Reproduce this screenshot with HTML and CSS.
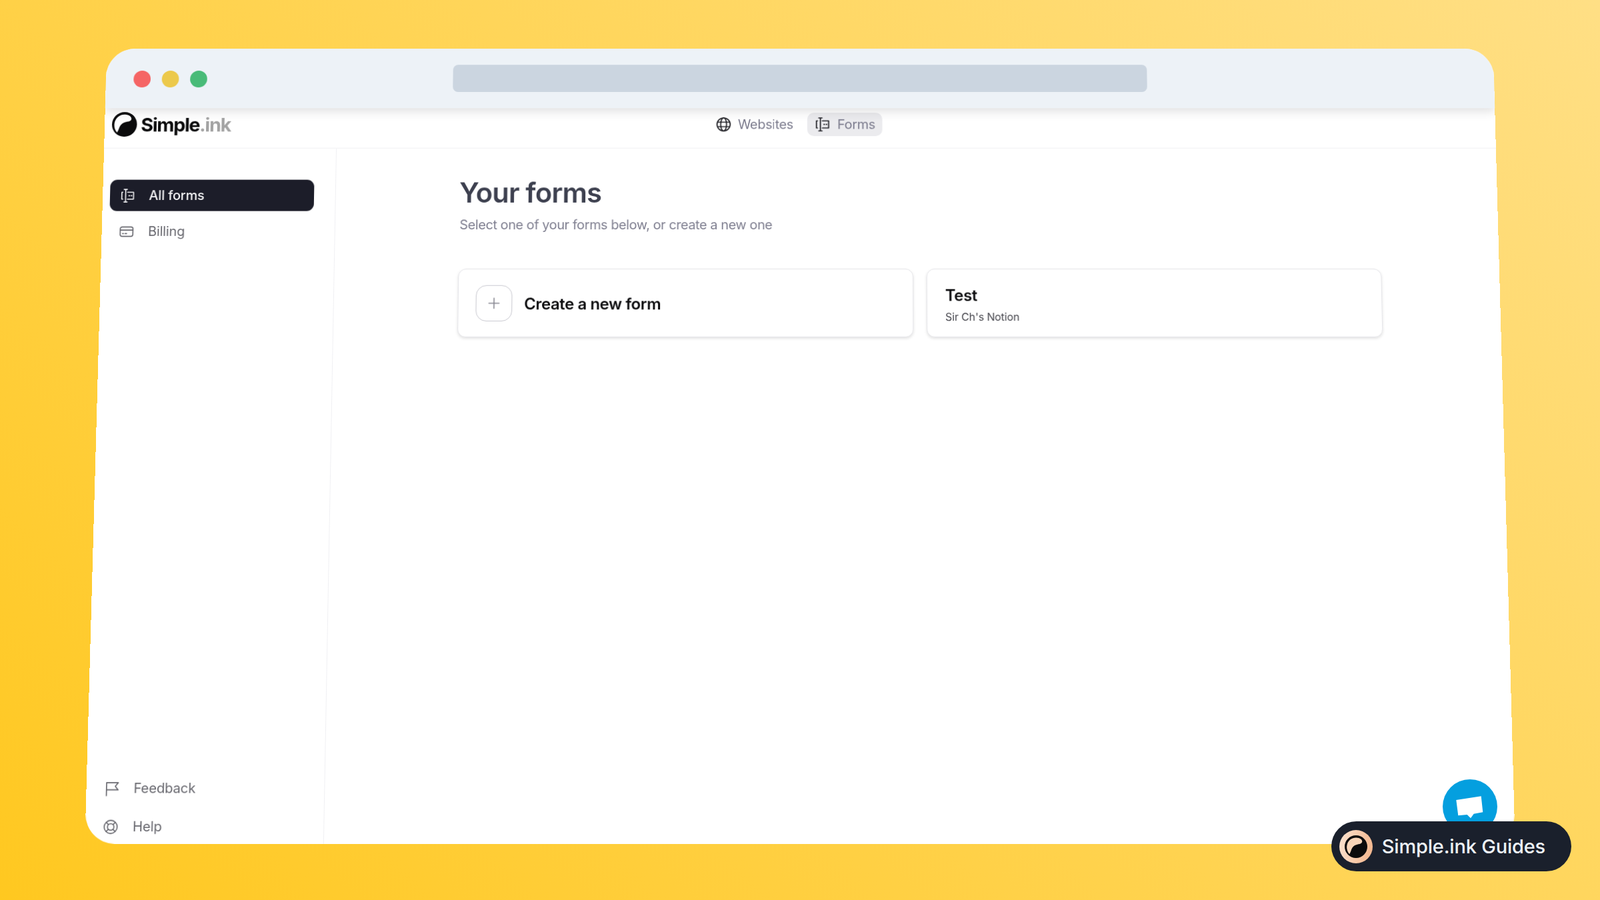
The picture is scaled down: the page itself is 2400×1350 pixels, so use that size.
FILE: index.html
```html
<!DOCTYPE html>
<html>
<head>
<meta charset="utf-8">
<title>Simple.ink forms</title>
<link rel="stylesheet" href="styles.css">
</head>
<body>
    <div class="window">
        <div class="chrome">
            <div class="dots">
                <span class="dot dot-red"></span>
                <span class="dot dot-yellow"></span>
                <span class="dot dot-green"></span>
            </div>
            <div class="urlbar"></div>
        </div>
        <div class="topnav">
            <a class="brand">
                <svg class="brand-logo" viewBox="0 0 100 100"><circle cx="50" cy="50" r="50" fill="#0b0b0c"/><path fill="#fff" d="M21 83C5 65 5 35 24 19C38 8 60 7 72 17C81 25 78 36 66 38C52 40 40 44 33 56C28 65 27 75 21 83Z"/></svg>
                <span class="brand-name">Simple<span class="brand-ink">.ink</span></span>
            </a>
            <nav class="tabs">
                <a class="tab">
                    <svg class="icon tab-globe" viewBox="0 0 24 24"><circle cx="12" cy="12" r="10"/><ellipse cx="12" cy="12" rx="4.500" ry="10"/><path d="M2.800 8.500h18.400M2.800 15.500h18.400"/></svg>
                    Websites
                </a>
                <a class="tab tab-active">
                    <svg class="icon tab-form" viewBox="0 0 24 24"><path d="M4.500 6.500H3v11h1.500M12 6.500h9.500v11H12M6.500 2h5M6.500 22h5M9 2v20"/><path class="icon-dots" d="M14.500 12h.5M18 12h.5"/></svg>
                    Forms
                </a>
            </nav>
            <div></div>
        </div>
        <div class="content">
            <aside class="sidebar">
                <ul class="menu">
                    <li class="menu-item menu-active">
                        <svg class="icon" viewBox="0 0 24 24"><path d="M4.500 6.500H3v11h1.500M12 6.500h9.500v11H12M6.500 2h5M6.500 22h5M9 2v20"/><path class="icon-dots" d="M14.500 12h.5M18 12h.5"/></svg>
                        All forms
                    </li>
                    <li class="menu-item">
                        <svg class="icon" viewBox="0 0 24 24"><rect x="2" y="4.500" width="20" height="15" rx="3"/><path d="M2 9.500h20"/><path class="icon-dots" d="M6 15h1M10 15h2"/></svg>
                        Billing
                    </li>
                </ul>
                <ul class="menu menu-bottom">
                    <li class="menu-item">
                        <svg class="icon" viewBox="0 0 24 24"><path d="M4 23V3h18l-4.500 5.500L22 14H4"/></svg>
                        Feedback
                    </li>
                    <li class="menu-item">
                        <svg class="icon" viewBox="0 0 24 24"><circle cx="12" cy="12" r="10"/><circle cx="12" cy="12" r="5"/><path d="M5 5l3.500 3.500M19 5l-3.500 3.500M5 19l3.500-3.500M19 19l-3.500-3.500"/></svg>
                        Help
                    </li>
                </ul>
            </aside>
            <main class="main">
                <h1 class="title">Your forms</h1>
                <p class="subtitle">Select one of your forms below, or create a new one</p>
                <div class="cards">
                    <a class="card card-new">
                        <span class="plus">
                            <svg class="icon" viewBox="0 0 24 24"><path d="M12 4v16M4 12h16"/></svg>
                        </span>
                        <span class="card-title">Create a new form</span>
                    </a>
                    <a class="card card-form">
                        <span class="card-title">Test</span>
                        <span class="card-sub">Sir Ch's Notion</span>
                    </a>
                </div>
            </main>
        </div>
    </div>

    <div class="chat">
        <svg viewBox="0 0 82 82"><path fill="#fff" d="M20.300 31L57.700 25.300L60.300 49.300L46.700 51.700L42 58.300L36.700 53L23.300 54.300Z"/></svg>
    </div>
    <div class="guides">
        <span class="guides-logo">
            <svg viewBox="0 0 100 100"><circle cx="50" cy="50" r="50" fill="#0b0b0c"/><path class="guides-swirl" d="M21 83C5 65 5 35 24 19C38 8 60 7 72 17C81 25 78 36 66 38C52 40 40 44 33 56C28 65 27 75 21 83Z"/></svg>
        </span>
        Simple.ink Guides
    </div>
</body>
</html>
```

FILE: styles.css
```css
* { box-sizing: border-box; }
html, body { margin: 0; height: 100%; }
body {
    height: 1350px;
    padding-top: 63px;
    overflow: hidden;
    position: relative;
    font-family: "Inter", "Liberation Sans", sans-serif;
    background: linear-gradient(42deg, #ffc820, #ffdf85);
}

/* the whole browser is tilted back a little */
.window {
    width: 2112px;
    height: 1194px;
    margin: 0 auto;
    display: flex;
    flex-direction: column;
    overflow: hidden;
    background: #fff;
    border-radius: 44px;
    transform: perspective(2000px) rotateX(3deg);
}

.chrome {
    height: 92px;
    flex: none;
    display: grid;
    grid-template-columns: 1fr 1056px 1fr;
    align-items: center;
    background: #edf2f7;
    position: relative;
    z-index: 1;
    box-shadow: 0 5px 14px rgba(60, 60, 70, .16);
}
.dots { display: flex; gap: 17px; padding: 2px 0 0 42px; }
.dot { width: 26px; height: 26px; border-radius: 50%; }
.dot-red { background: #f56565; }
.dot-yellow { background: #ecc94b; }
.dot-green { background: #48bb78; }
.urlbar { height: 42px; background: #cbd5e0; border-radius: 8px; grid-column: 2; }

.topnav {
    height: 62px;
    flex: none;
    display: grid;
    grid-template-columns: 1fr auto 1fr;
    align-items: start;
    padding-top: 6px;
    border-bottom: 1px solid #f0f0f3;
}
.brand { display: flex; align-items: center; gap: 6px; height: 38px; padding-left: 11px; }
.brand-logo { width: 38px; height: 38px; }
.brand-name { font-size: 29px; font-weight: 700; letter-spacing: -1.300px; color: #0b0b0c; }
.brand-ink { color: #a3a3a3; }
.tabs { display: flex; gap: 21px; margin: 1px 13px 0 0; }
.tab {
    display: flex;
    align-items: center;
    gap: 10px;
    height: 36px;
    padding: 0 10px;
    font-size: 20px;
    letter-spacing: -.3px;
    color: #7b7b8d;
    border-radius: 10px;
    margin-right: -10px;
}
.tab-active { background: #ebebee; margin: 0; padding: 0 11px; gap: 11px; }
.tab .icon { width: 24px; height: 24px; color: #1f1f24; }

.icon {
    width: 23px;
    height: 23px;
    flex: none;
    fill: none;
    stroke: currentColor;
    stroke-width: 1.700;
    stroke-linecap: round;
    stroke-linejoin: round;
}
.icon-dots { stroke-width: 2; }

.content { flex: 1; display: flex; min-height: 0; }
.sidebar {
    width: 353px;
    flex: none;
    display: flex;
    flex-direction: column;
    justify-content: space-between;
    padding: 48px 32px 0 11px;
    border-right: 1px solid #f0f0f3;
}
.menu { list-style: none; margin: 0; padding: 0; display: flex; flex-direction: column; gap: 7px; }
.menu-bottom { gap: 8px; margin-bottom: 1px; }
.menu-item {
    display: flex;
    align-items: center;
    gap: 21px;
    height: 48px;
    padding-left: 15px;
    font-size: 20px;
    letter-spacing: -.15px;
    color: #68686f;
    border-radius: 11px;
}
.menu-active { background: #1c1d29; color: #f2f2f4; font-weight: 500; }

.main { flex: 1; padding: 42px 178px 0 187px; }
.title {
    margin: 0;
    font-size: 42px;
    line-height: 52px;
    font-weight: 600;
    letter-spacing: -.8px;
    color: #3d404f;
}
.subtitle {
    margin: 9px 0 53px 1px;
    font-size: 20px;
    line-height: 28px;
    letter-spacing: -.4px;
    color: #7f7f90;
}
.cards { display: grid; grid-template-columns: 1fr 1fr; gap: 20px; }
.card {
    height: 104px;
    display: flex;
    background: #fff;
    border: 1px solid #e6e6ea;
    border-radius: 12px;
    box-shadow: 0 2px 4px rgba(0, 0, 0, .12);
}
.card-new { align-items: center; gap: 18px; padding-left: 26px; }
.card-form { flex-direction: column; justify-content: center; gap: 8px; padding: 5px 0 0 27px; }
.card-title { font-size: 24px; font-weight: 600; letter-spacing: -.38px; color: #0c0c0e; }
.card-new .card-title { padding-top: 2px; }
.card-sub { font-size: 16px; color: #45454c; letter-spacing: -.1px; }
.plus {
    width: 55px;
    height: 55px;
    display: flex;
    align-items: center;
    justify-content: center;
    border: 1px solid #c9c9d0;
    border-radius: 16px;
    color: #85858f;
}

.chat {
    position: absolute;
    right: 154px;
    bottom: 99px;
    width: 82px;
    height: 82px;
    border-radius: 50%;
    background: #049fdf;
}
.chat svg { display: block; width: 82px; height: 82px; }

.guides {
    position: absolute;
    right: 43px;
    bottom: 43px;
    height: 75px;
    display: flex;
    align-items: center;
    gap: 14px;
    padding: 0 39px 0 12px;
    background: #1a202c;
    border-radius: 38px;
    font-size: 29px;
    font-weight: 500;
    letter-spacing: -.2px;
    color: #edf2f7;
}
.guides-logo {
    width: 50px;
    height: 50px;
    display: flex;
    align-items: center;
    justify-content: center;
    border-radius: 50%;
    background: linear-gradient(100deg, #fbe3d0, #f2b48a);
}
.guides-logo svg { width: 34px; height: 34px; }
.guides-swirl { fill: #f8d5b8; }
```
